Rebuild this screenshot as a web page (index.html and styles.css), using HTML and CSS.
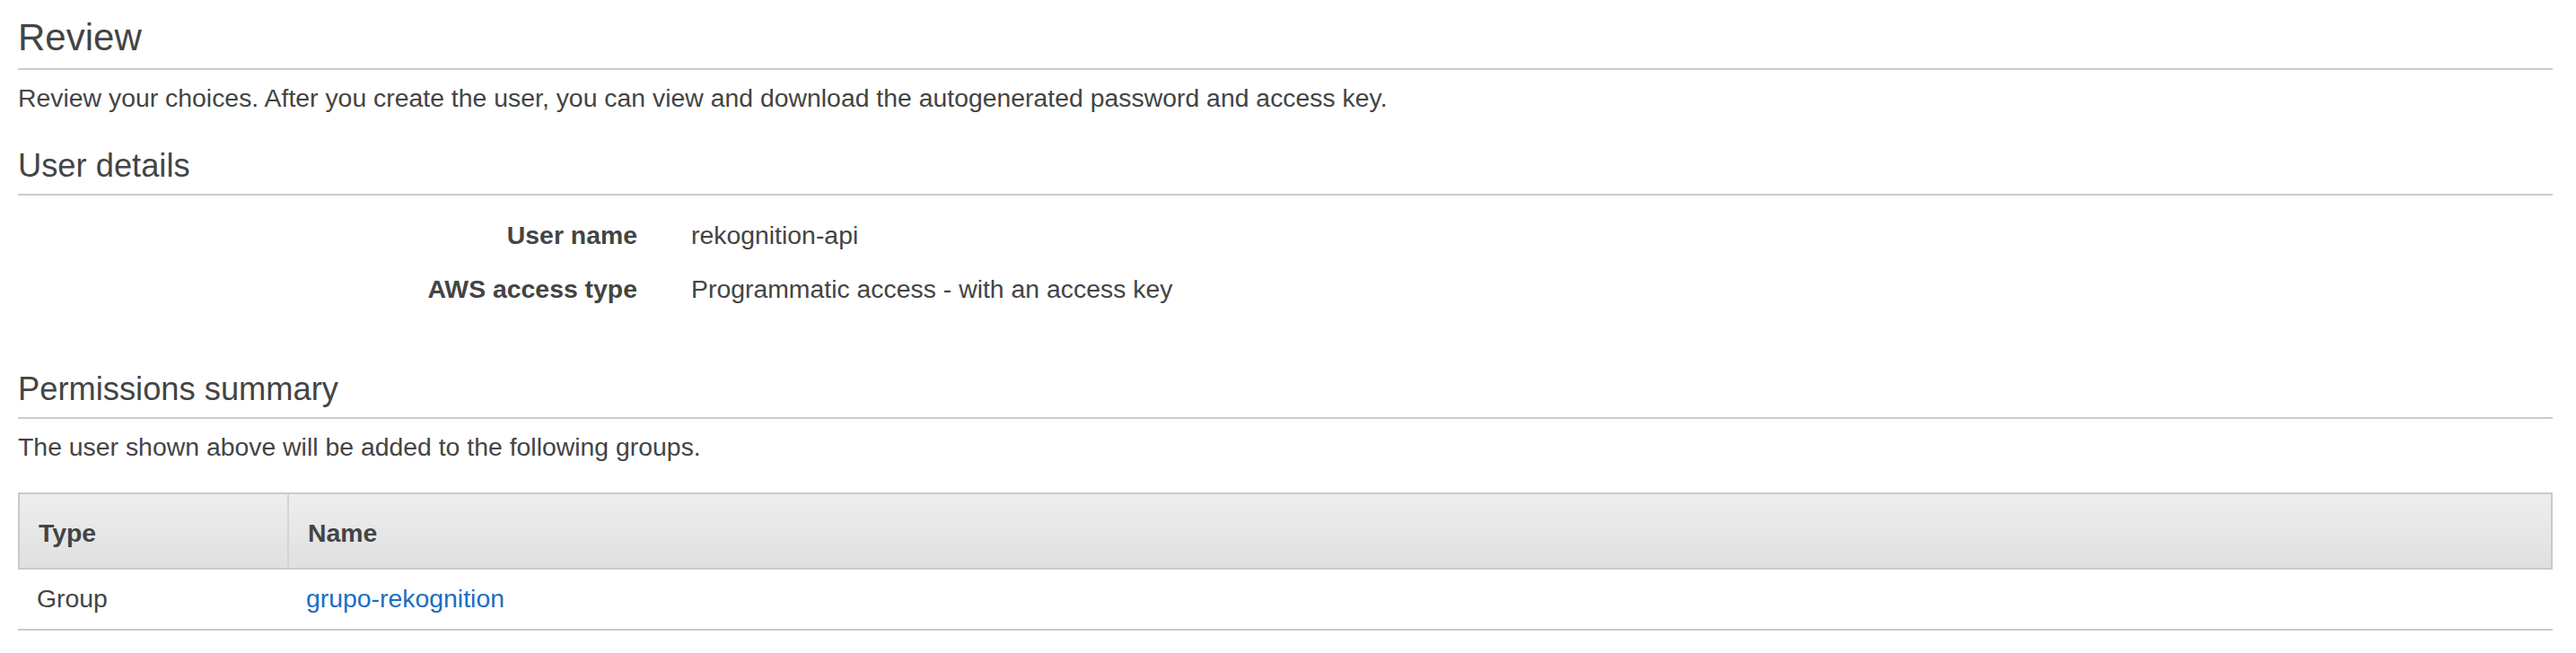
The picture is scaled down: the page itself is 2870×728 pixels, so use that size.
FILE: index.html
```html
<!DOCTYPE html>
<html lang="en">
<head>
<meta charset="utf-8">
<title>Review</title>
<link rel="stylesheet" href="styles.css">
</head>
<body>
<main class="page">
  <h1 class="page-title">Review</h1>
  <p class="lead">Review your choices. After you create the user, you can view and download the autogenerated password and access key.</p>

  <section class="section section-user">
    <h2 class="section-title">User details</h2>
    <dl class="details">
      <dt class="details-label">User name</dt>
      <dd class="details-value">rekognition-api</dd>
      <dt class="details-label">AWS access type</dt>
      <dd class="details-value">Programmatic access - with an access key</dd>
    </dl>
  </section>

  <section class="section section-perms">
    <h2 class="section-title">Permissions summary</h2>
    <p class="lead">The user shown above will be added to the following groups.</p>
    <table class="groups">
      <colgroup>
        <col class="col-type">
        <col class="col-name">
      </colgroup>
      <thead>
        <tr>
          <th class="groups-th">Type</th>
          <th class="groups-th">Name</th>
        </tr>
      </thead>
      <tbody>
        <tr>
          <td class="groups-td">Group</td>
          <td class="groups-td"><a class="link" href="#">grupo-rekognition</a></td>
        </tr>
      </tbody>
    </table>
  </section>
</main>
</body>
</html>
```

FILE: styles.css
```css
html, body {
  margin: 0;
  padding: 0;
  background: #ffffff;
}

body {
  font-family: "Liberation Sans", Arial, Helvetica, sans-serif;
  color: #444444;
}

.page {
  padding: 0 26px 0 20px;
}

.page-title {
  margin: 17px 0 0;
  font-size: 42px;
  line-height: 50px;
  font-weight: normal;
  color: #444444;
  padding-bottom: 9px;
  border-bottom: 2px solid #cccccc;
}

.lead {
  margin: 11px 0 0;
  font-size: 28.4px;
  line-height: 40px;
  color: #444444;
}

.section-title {
  margin: 0;
  font-size: 36.3px;
  line-height: 44px;
  font-weight: normal;
  color: #444444;
  padding-bottom: 9px;
  border-bottom: 2px solid #cccccc;
}

.section-user {
  margin-top: 34px;
}

.section-perms {
  margin-top: 70px;
}

.details {
  margin: 24px 0 0;
  display: grid;
  grid-template-columns: 690px 1fr;
  column-gap: 60px;
  row-gap: 20px;
  font-size: 28.4px;
  line-height: 40px;
}

.details-label {
  margin: 0;
  text-align: right;
  font-weight: bold;
  color: #444444;
}

.details-value {
  margin: 0;
  color: #444444;
}

.groups {
  margin-top: 31px;
  width: 100%;
  table-layout: fixed;
  border-collapse: separate;
  border-spacing: 0;
  font-size: 28.4px;
  line-height: 40px;
}

.col-type {
  width: 300px;
}

.groups-th {
  text-align: left;
  font-weight: bold;
  color: #444444;
  padding: 23px 21px 19px 21px;
  background: linear-gradient(#eeeeee, #e0e0e0);
  border-top: 2px solid #c9c9c9;
  border-bottom: 2px solid #c9c9c9;
  border-left: 2px solid #c9c9c9;
}

.groups-th:last-child {
  border-left-color: #d4d4d4;
  border-right: 2px solid #c9c9c9;
}

.groups-td {
  padding: 12px 21px 14px 21px;
  border-bottom: 2px solid #cccccc;
  color: #444444;
}

.link {
  color: #1a6ec2;
  text-decoration: none;
}
```
